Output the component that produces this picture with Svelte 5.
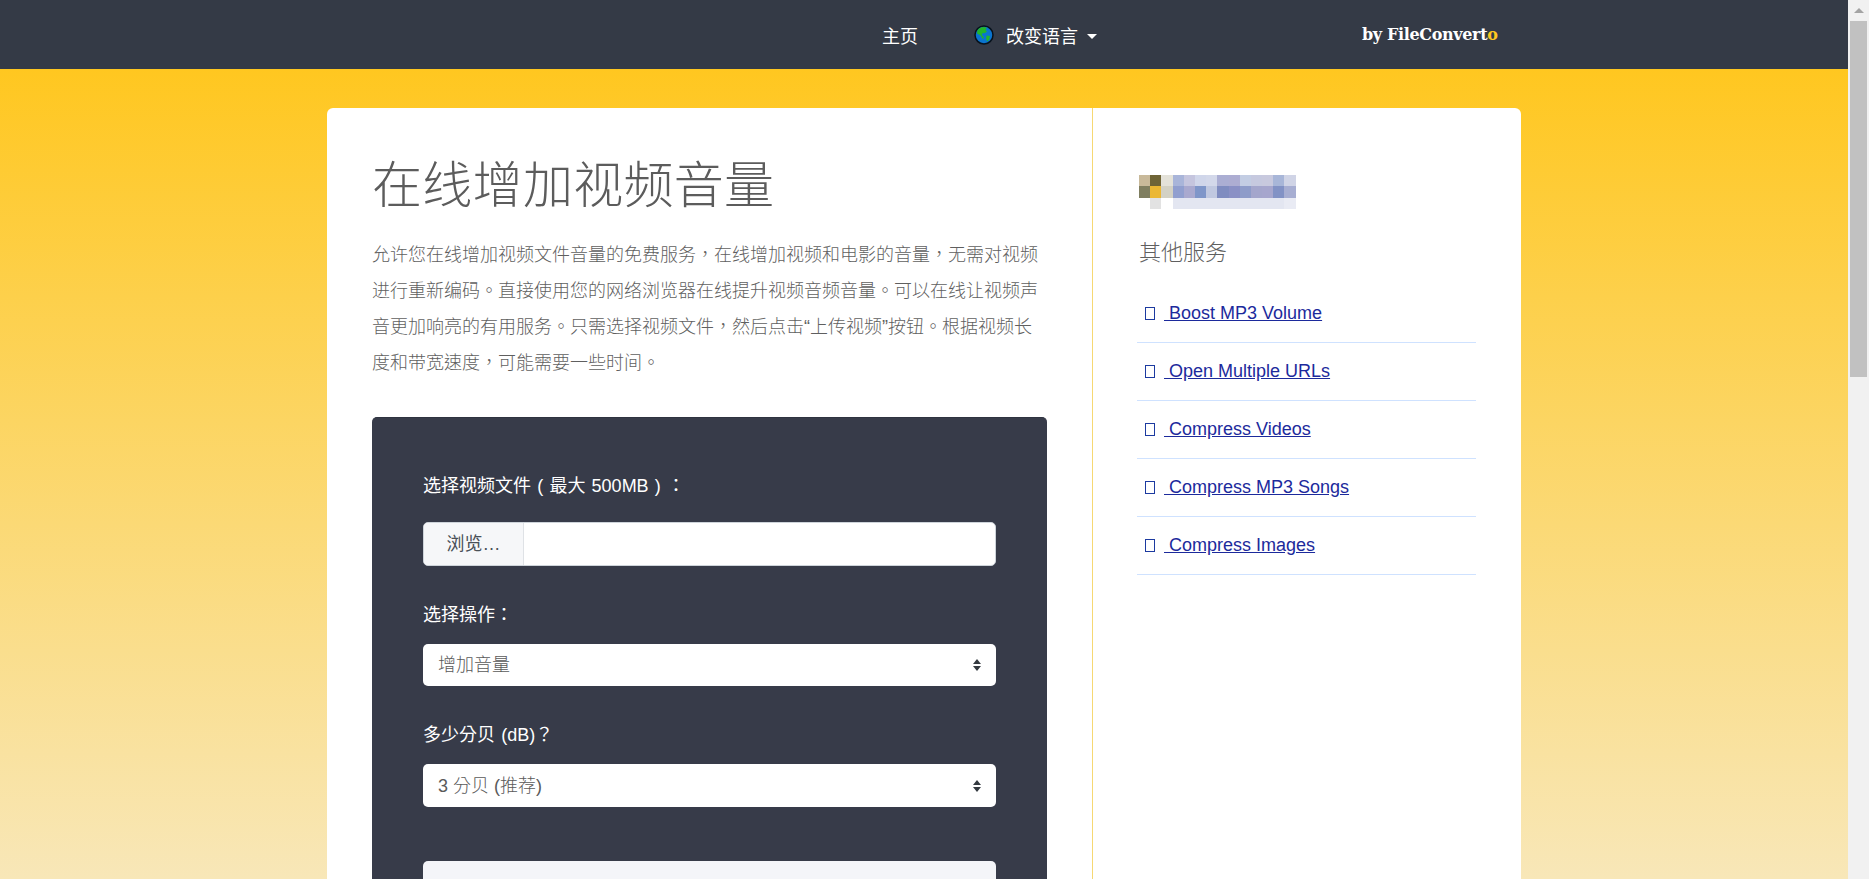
<script>
  const pixels = [
    ['#c8b99a','#6f6436','#e4e2d9','#a9b5d9','#c5c5de','#d0d6ea','#d3d8ea','#abaed3','#adadd2','#c3cde3','#c6c9df','#c8c9de','#a8b6d8','#d0d4e6'],
    ['#7f7e60','#ebb733','#d3d1c4','#919fcf','#a9a9cf','#7f96c9','#c0c8e0','#7f8cc0','#8a90c5','#8e9cc9','#a4a6cc','#a6a6cd','#8292c5','#a7aed2'],
    ['#fff','#e2e2e2','#fff','#e3e6f1','#e3e6f1','#e3e6f1','#e3e6f1','#e3e6f1','#e3e6f1','#e3e6f1','#e3e6f1','#e3e6f1','#e3e6f1','#e9ebf4']
  ];
  const links = ['Boost MP3 Volume', 'Open Multiple URLs', 'Compress Videos', 'Compress MP3 Songs', 'Compress Images'];
</script>

<div class="window">
  <div class="page">
    <header>
      <nav>
        <a class="home" href="#top">主页</a>
        <a class="lang" href="#top">
          <svg width="20" height="20" viewBox="0 0 20 20" aria-hidden="true">
            <circle cx="10" cy="10" r="9" fill="#0a74cf" stroke="#08121c" stroke-width="1.5"/>
            <path d="M5 3.6 8.2 2l4.6.6L11.6 5 13 6.6l-2.4 1.6L8.6 8l-.8 1.8 2.2 3-1.4 1.2-2-3.4L3 8.6 3.4 5.6z" fill="#22b52a"/>
            <path d="M12.6 10.4l3.4.6-.8 3.6-2.2 2-.8-3.2z" fill="#22b52a"/>
          </svg>
          <span>改变语言</span>
          <i class="caret"></i>
        </a>
      </nav>
      <div class="brand">by FileConvert<span>o</span></div>
    </header>

    <main>
      <div class="card">
        <section class="left">
          <h1>在线增加视频音量</h1>
          <p>允许您在线增加视频文件音量的免费服务，在线增加视频和电影的音量，无需对视频进行重新编码。直接使用您的网络浏览器在线提升视频音频音量。可以在线让视频声音更加响亮的有用服务。只需选择视频文件，然后点击“上传视频”按钮。根据视频长度和带宽速度，可能需要一些时间。</p>

          <form class="panel" onsubmit={(e) => e.preventDefault()}>
            <div class="label first">选择视频文件 ( 最大 500MB ) ：</div>
            <div class="file">
              <div class="browse">浏览…</div>
            </div>

            <div class="label second">选择操作：</div>
            <div class="select s1">
              <span>增加音量</span>
              <svg width="10" height="14" viewBox="0 0 10 14" aria-hidden="true"><path d="M5 1 9 6H1zM5 13 1 8h8z" fill="#343a40"/></svg>
            </div>

            <div class="label third">多少分贝 (dB)？</div>
            <div class="select s2">
              <span>3 分贝 (推荐)</span>
              <svg width="10" height="14" viewBox="0 0 10 14" aria-hidden="true"><path d="M5 1 9 6H1zM5 13 1 8h8z" fill="#343a40"/></svg>
            </div>

            <div class="submit"></div>
          </form>
        </section>

        <aside>
          <div class="logo">
            {#each pixels as row}
              <div class="row">
                {#each row as c}<b style="background:{c}"></b>{/each}
              </div>
            {/each}
          </div>
          <h2>其他服务</h2>
          <ul>
            {#each links as l}
              <li><i class="tofu"></i><a href="#top">&nbsp;{l}</a></li>
            {/each}
          </ul>
        </aside>
      </div>
    </main>
  </div>

  <div class="scrollbar">
    <div class="arrow"></div>
    <div class="thumb"></div>
  </div>
</div>

<style>
  :global(body) {
    margin: 0;
    overflow: hidden;
    font-family: "Liberation Sans", "Noto Sans CJK TC", sans-serif;
  }
  .window {
    display: flex;
    height: 879px;
    overflow: hidden;
  }
  .page {
    flex: 1;
    min-width: 0;
    height: 879px;
    overflow: hidden;
    display: flex;
    flex-direction: column;
  }
  header {
    height: 69px;
    flex: none;
    background: #343a46;
    display: flex;
    align-items: center;
    padding-left: 882px;
    color: #fff;
  }
  nav {
    display: flex;
    align-items: center;
    gap: 56px;
    font-size: 18px;
  }
  nav a {
    color: #fff;
    text-decoration: none;
    display: flex;
    align-items: center;
  }
  .lang svg { margin-right: 12px; }
  .caret {
    width: 0;
    height: 0;
    margin-left: 9px;
    margin-top: 3px;
    border-left: 5px solid transparent;
    border-right: 5px solid transparent;
    border-top: 5px solid #fff;
  }
  .brand {
    margin-left: 265px;
    font-family: "DejaVu Serif", serif;
    font-weight: 700;
    font-size: 16px;
    letter-spacing: -0.35px;
  }
  .brand span { color: #ffc720; }
  main {
    flex: 1;
    min-height: 0;
    padding-top: 39px;
    display: flex;
    justify-content: center;
    background: linear-gradient(#ffc720 0, #f8e7b8 100%);
  }
  .card {
    width: 1194px;
    background: #fff;
    border-radius: 6px 6px 0 0;
    display: flex;
    align-items: stretch;
  }
  .left {
    width: 766px;
    box-sizing: border-box;
    padding: 44px 45px 0;
    border-right: 1px solid #f6d873;
    flex: none;
  }
  h1 {
    margin: 0;
    font-size: 50px;
    line-height: 68px;
    font-weight: 300;
    color: #5c5c5c;
    letter-spacing: 0.3px;
  }
  p {
    margin: 17px 0 0;
    font-size: 18px;
    line-height: 36px;
    color: #5f5f5f;
    font-weight: 300;
    width: 676px;
  }
  .panel {
    margin-top: 36px;
    box-sizing: border-box;
    width: 675px;
    height: 520px;
    background: #373b49;
    border-top: 1px solid #2f3340;
    border-radius: 5px;
    padding: 0 51px;
  }
  .label {
    color: #fff;
    font-size: 18px;
    line-height: 26px;
    word-spacing: 1.2px;
  }
  .first { margin-top: 55px; }
  .second { margin-top: 36px; }
  .third { margin-top: 36px; }
  .file {
    margin-top: 23px;
    height: 44px;
    box-sizing: border-box;
    background: #fff;
    border: 1px solid #ced4da;
    border-radius: 5px;
    overflow: hidden;
  }
  .browse {
    width: 100px;
    height: 100%;
    box-sizing: border-box;
    background: #f6f7f9;
    border-right: 1px solid #dfe2e6;
    color: #495057;
    font-size: 18px;
    line-height: 42px;
    text-align: center;
  }
  .select {
    background: #fff;
    border-radius: 5px;
    display: flex;
    align-items: center;
    justify-content: space-between;
    padding: 0 14px 0 15px;
    color: #5a5a5a;
    font-size: 18px;
    font-weight: 300;
    box-sizing: border-box;
  }
  .select span { padding-bottom: 4px; }
  .s1 { margin-top: 16px; height: 42px; }
  .s2 { margin-top: 16px; height: 43px; }
  .submit {
    margin-top: 54px;
    height: 70px;
    background: #f4f5f9;
    border-radius: 5px;
  }
  aside {
    flex: 1;
    min-width: 0;
    padding: 67px 0 0 46px;
  }
  .logo { display: flex; flex-direction: column; }
  .row { display: flex; }
  .row b { width: 11.2px; height: 11.33px; display: block; }
  h2 {
    margin: 27px 0 0;
    font-size: 22px;
    line-height: 34px;
    font-weight: 300;
    color: #5f5f5f;
  }
  ul {
    list-style: none;
    margin: 15px 0 0 -2px;
    padding: 0;
    width: 339px;
  }
  li {
    height: 58px;
    box-sizing: border-box;
    border-bottom: 1px solid #cfe2ff;
    padding-left: 8px;
    display: flex;
    align-items: center;
    font-size: 18px;
  }
  li a {
    color: #1c2a9c;
    text-decoration: underline;
    white-space: pre;
  }
  .tofu {
    width: 8px;
    height: 11px;
    border: 1px solid #1c3aa0;
    margin-right: 9px;
    flex: none;
  }
  .scrollbar {
    width: 21px;
    flex: none;
    height: 879px;
    background: #f1f1f1;
    padding: 8px 2px 0;
    box-sizing: border-box;
  }
  .arrow {
    width: 0;
    height: 0;
    margin: 0 auto 8px;
    border-left: 5px solid transparent;
    border-right: 5px solid transparent;
    border-bottom: 5px solid #a3a3a3;
  }
  .thumb {
    height: 356px;
    background: #c1c1c1;
  }
</style>
